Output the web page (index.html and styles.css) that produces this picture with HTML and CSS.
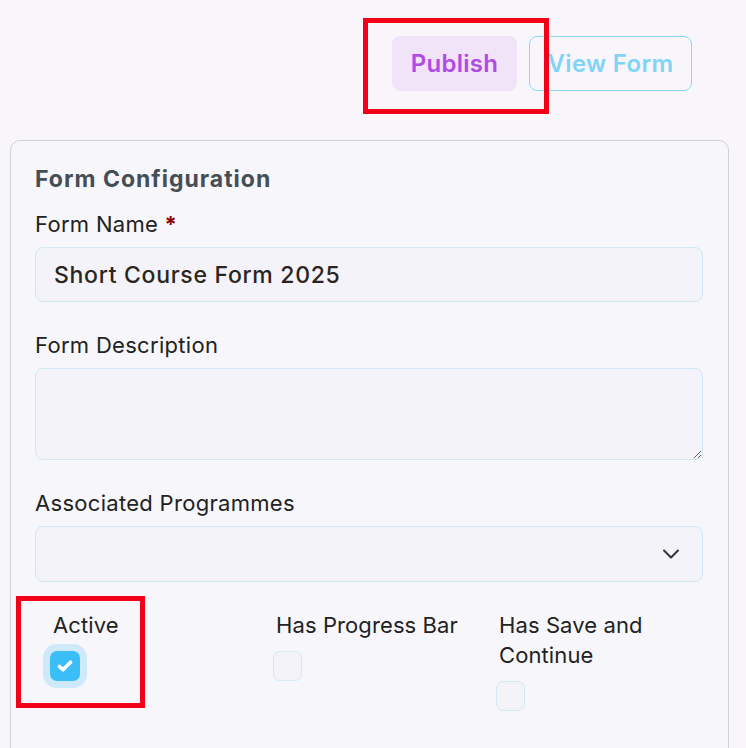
FILE: index.html
```html
<!DOCTYPE html>
<html>
<head>
<meta charset="utf-8">
<link rel="stylesheet" href="styles.css">
</head>
<body>
<div class="page">
  <div class="toolbar">
    <button class="btn btn-publish">Publish</button>
    <button class="btn btn-view">View Form</button>
  </div>
  <div class="card">
    <h2 class="card-title">Form Configuration</h2>
    <div class="field">
      <label class="label">Form Name <span class="req">*</span></label>
      <input class="input" type="text" value="Short Course Form 2025">
    </div>
    <div class="field">
      <label class="label">Form Description</label>
      <textarea class="textarea"></textarea>
    </div>
    <div class="field">
      <label class="label">Associated Programmes</label>
      <div class="select">
        <svg class="chev" width="18" height="12" viewBox="0 0 18 12"><path d="M2 2.5 L9 9.5 L16 2.5" fill="none" stroke="#333" stroke-width="2" stroke-linecap="round" stroke-linejoin="round"/></svg>
      </div>
    </div>
    <div class="checks">
      <div class="check-col">
        <div class="check-label">Active</div>
        <span class="cb cb-on"><svg width="16" height="14" viewBox="0 0 16 14"><path d="M2.5 7.5 L6 10.8 L13.5 3.2" fill="none" stroke="#fff" stroke-width="3.6" stroke-linecap="round" stroke-linejoin="round"/></svg></span>
      </div>
      <div class="check-col">
        <div class="check-label">Has Progress Bar</div>
        <span class="cb"></span>
      </div>
      <div class="check-col">
        <div class="check-label">Has Save and Continue</div>
        <span class="cb"></span>
      </div>
    </div>
  </div>
  <div class="mark mark-publish"></div>
  <div class="mark mark-active"></div>
</div>
</body>
</html>
```
FILE: styles.css
```css
* { box-sizing: border-box; }
html, body { margin: 0; padding: 0; }
body {
  background: #f8f6fa;
  font-family: "Inter", "Open Sans", sans-serif;
  color: #222;
  width: 746px;
  height: 748px;
  overflow: hidden;
}
.page { position: relative; height: 748px; }
.toolbar {
  display: flex;
  justify-content: flex-end;
  gap: 12px;
  padding: 36px 54px 0 0;
  height: 140px;
}
.btn {
  height: 55px;
  border-radius: 8px;
  font-family: inherit;
  font-size: 24px;
  font-weight: 600;
  letter-spacing: 0.3px;
  padding: 0;
  cursor: pointer;
}
.btn-publish {
  background: #f1e3f8;
  color: #b14be5;
  border: none;
  width: 125px;
}
.btn-view {
  background: transparent;
  color: #7fd4f7;
  border: 1px solid #8ed8f6;
  width: 163px;
}
.card {
  margin-left: 10px;
  width: 719px;
  height: 640px;
  border: 1px solid #d3d3d7;
  border-radius: 10px;
  background: #f7f6fa;
  padding: 22px 24px 0 24px;
}
.card-title {
  margin: 0 0 14px 0;
  font-size: 23px;
  font-weight: 700;
  letter-spacing: 1px;
  color: #454d55;
  line-height: 32px;
}
.field { margin-bottom: 28px; }
.label {
  display: block;
  font-size: 22px;
  letter-spacing: 0.3px;
  line-height: 30px;
  color: #222;
  margin-bottom: 8px;
}
.req { color: #8b0000; font-weight: 700; }
.input, .textarea, .select {
  display: block;
  width: 668px;
  border: 1px solid #cfe8f7;
  border-radius: 8px;
  background: #f3f3f9;
  font-family: inherit;
  margin: 0;
}
.input {
  height: 55px;
  padding: 0 18px;
  font-size: 23px;
  font-weight: 500;
  letter-spacing: 0.7px;
  color: #2b2520;
  outline: none;
}
.textarea {
  height: 92px;
  resize: vertical;
  outline: none;
  vertical-align: top;
}
.select {
  height: 56px;
  display: flex;
  align-items: center;
  justify-content: flex-end;
  padding-right: 22px;
}
.checks {
  display: grid;
  grid-template-columns: 223px 223px 222px;
}
.check-col { padding: 0 16px 0 15px; }
.check-label {
  font-size: 22px;
  letter-spacing: 0.1px;
  line-height: 30px;
  color: #222;
  padding-left: 3px;
  margin-bottom: 11px;
}
.cb {
  display: flex;
  align-items: center;
  justify-content: center;
  width: 29px;
  height: 30px;
  border: 1.5px solid #d3e9f7;
  border-radius: 7px;
  background: #f3f3f9;
}
.cb-on {
  width: 30px;
  height: 30px;
  background: #3bbdf8;
  border: none;
  box-shadow: 0 0 0 7px #cde9fa;
}
.mark {
  position: absolute;
  border: 5px solid #f20018;
}
.mark-publish { left: 363px; top: 18px; width: 186px; height: 96px; }
.mark-active { left: 16px; top: 596px; width: 129px; height: 112px; }
```
